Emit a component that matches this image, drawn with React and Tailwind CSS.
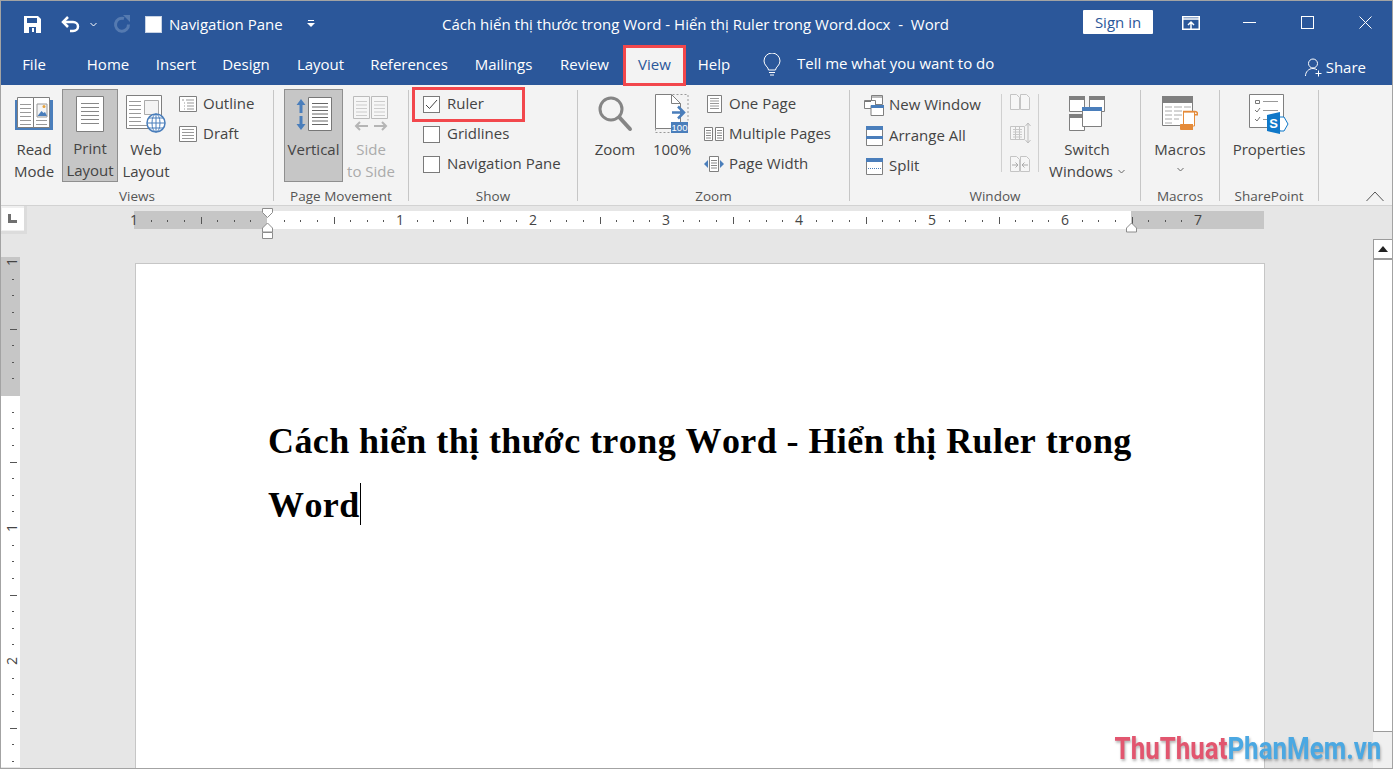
// Word window, View tab, ruler switched on
const gray = '#7f7f7f';
const blue = '#4a7ebb';

const tabs = [
  { label: 'File', cls: 'w-[66px]' },
  { label: 'Home', cls: 'w-[82px]' },
  { label: 'Insert', cls: 'w-[54px]' },
  { label: 'Design', cls: 'w-[86px]' },
  { label: 'Layout', cls: 'w-[63px]' },
  { label: 'References', cls: 'w-[114px]' },
  { label: 'Mailings', cls: 'w-[75px]' },
  { label: 'Review', cls: 'w-[82px] pl-[5px]' },
];

function Lines({ x, y, w, n, gap = 4, color = '#8c8c8c' }) {
  const out = [];
  for (let i = 0; i < n; i++) {
    out.push(<path key={i} d={`M${x} ${y + i * gap + 0.5}h${w}`} stroke={color} fill="none" />);
  }
  return <>{out}</>;
}

function ReadModeIcon() {
  return (
    <svg width="38" height="35" viewBox="0 0 38 35">
      <path d="M0 4h3v27h32V4h3v30H0z" fill={blue} />
      <path d="M2.500 1.500h16v30h-16zM18.500 1.500h16v30h-16z" fill="#fff" stroke={gray} />
      <Lines x={5} y={8} w={11} n={6} color="#999" />
      <Lines x={21} y={24} w={11} n={2} color="#999" />
      <path d="M22 8h10v13H22z" fill="#f5f5f5" stroke="#999" />
      <path d="M22.500 20l4-5 2 2 1.500-1 2 4z" fill={blue} />
      <circle cx="29" cy="10.500" r="1.500" fill="#e8a33d" />
    </svg>
  );
}

function PageIcon() {
  return (
    <svg width="28" height="36" viewBox="0 0 28 36">
      <path d="M.5.500h27v35H.5z" fill="#fff" stroke={gray} />
      <Lines x={5} y={7} w={18} n={6} gap={4} color="#888" />
    </svg>
  );
}

function WebLayoutIcon() {
  return (
    <svg width="40" height="38" viewBox="0 0 40 38">
      <path d="M.5.500h35v33H.5z" fill="#fff" stroke={gray} />
      <Lines x={3} y={6} w={12} n={6} gap={4} color="#999" />
      <Lines x={3} y={30} w={18} n={1} color="#999" />
      <path d="M18.500 5.500h14v14h-14z" fill="#f4f4f4" stroke="#aaa" />
      <circle cx="30" cy="28" r="9" fill="#fff" stroke={blue} strokeWidth="1.500" />
      <path d="M21 28h18M30 19v18M23 23h14M23 33h14" stroke={blue} fill="none" />
      <ellipse cx="30" cy="28" rx="4" ry="9" fill="none" stroke={blue} />
    </svg>
  );
}

function OutlineIcon() {
  return (
    <svg width="18" height="16" viewBox="0 0 18 16">
      <path d="M.5.500h17v15H.5z" fill="#fff" stroke={gray} />
      <path d="M3 4h2M7 4h8M5 7h1M8 7h7M5 10h1M8 10h7M5 13h1M8 13h7" stroke="#999" fill="none" />
    </svg>
  );
}

function DraftIcon() {
  return (
    <svg width="18" height="16" viewBox="0 0 18 16">
      <path d="M.5.500h17v15H.5z" fill="#fff" stroke={gray} />
      <Lines x={3} y={3} w={12} n={4} gap={3} color="#999" />
    </svg>
  );
}

function VerticalIcon() {
  return (
    <svg width="36" height="35" viewBox="0 0 36 35">
      <path d="M12.500.500h23v33h-23z" fill="#fff" stroke="#777" />
      <Lines x={16} y={6} w={16} n={7} gap={3.500} color="#666" />
      <path d="M5 2L0.500 8H3.500v8h3V8h3zM5 33L0.500 27H3.500v-8h3v8h3z" fill={blue} />
    </svg>
  );
}

function SideToSideIcon() {
  return (
    <svg width="36" height="36" viewBox="0 0 36 36">
      <path d="M.5.500h16v22H.5zM18.500.500h16v22h-16z" fill="#f6f6f6" stroke="#bbb" />
      <Lines x={3} y={5} w={11} n={5} gap={3.500} color="#ccc" />
      <Lines x={21} y={5} w={11} n={5} gap={3.500} color="#ccc" />
      <path d="M15 30H3M7 26l-4 4 4 4M21 30h12M29 26l4 4-4 4" stroke="#b5b5b5" strokeWidth="2" fill="none" />
    </svg>
  );
}

function ZoomIcon() {
  return (
    <svg width="36" height="36" viewBox="0 0 36 36">
      <circle cx="14" cy="13" r="11" fill="none" stroke="#858585" strokeWidth="3" />
      <path d="M22.500 21.500L33 33" stroke="#858585" strokeWidth="4" strokeLinecap="round" />
    </svg>
  );
}

function HundredIcon() {
  return (
    <svg width="34" height="40" viewBox="0 0 34 40">
      <path d="M.5 34.500V.5h16l9 9v25z" fill="#fff" stroke={gray} />
      <path d="M16.500.5v9h9" fill="none" stroke={gray} />
      <path d="M.5 34.500v4h16M17.500.5h15.500v26" stroke="#999" strokeDasharray="2 2" fill="none" />
      <path d="M17 18.500h12M23 12.500l6 6-6 6" stroke={blue} strokeWidth="2.500" fill="none" />
      <path d="M16 28h17v11H16z" fill={blue} />
      <text x="24.500" y="37" textAnchor="middle" fontSize="9.500" fill="#fff" fontFamily="'Liberation Sans',sans-serif">100</text>
    </svg>
  );
}

function OnePageIcon() {
  return (
    <svg width="15" height="18" viewBox="0 0 15 18">
      <path d="M.5.500h14v17H.5z" fill="#fff" stroke={gray} />
      <Lines x={3} y={3} w={9} n={5} gap={2.500} color="#999" />
    </svg>
  );
}

function MultiPagesIcon() {
  return (
    <svg width="20" height="14" viewBox="0 0 20 14">
      <path d="M.5.500h8v13h-8zM11.500.500h8v13h-8z" fill="#fff" stroke={gray} />
      <Lines x={2} y={3} w={5} n={4} gap={2.500} color="#888" />
      <Lines x={13} y={3} w={5} n={4} gap={2.500} color="#888" />
    </svg>
  );
}

function PageWidthIcon() {
  return (
    <svg width="20" height="16" viewBox="0 0 20 16">
      <path d="M5.500.500h9v15h-9z" fill="#fff" stroke={gray} />
      <Lines x={7} y={4} w={6} n={4} gap={2.500} color="#888" />
      <path d="M0 8l4-4v8zM20 8l-4-4v8z" fill={blue} />
    </svg>
  );
}

function NewWindowIcon() {
  return (
    <svg width="20" height="21" viewBox="0 0 20 21">
      <path d="M7.500.500h11v9h-11z" fill="#fff" stroke={gray} />
      <path d="M.5 5.500h11v8H.5z" fill="#fff" stroke={gray} />
      <path d="M7 10.500h12.500v10H7z" fill="#fff" stroke={gray} />
      <path d="M7 10h13v3H7z" fill={blue} />
      <path d="M8 2h10M1 6.500h6" stroke="#777" fill="none" />
    </svg>
  );
}

function ArrangeIcon() {
  return (
    <svg width="17" height="20" viewBox="0 0 17 20">
      <path d="M.5.500h16v19H.5z" fill="#fff" stroke={gray} />
      <path d="M0 0h17v4H0zM0 10h17v3H0z" fill={blue} />
    </svg>
  );
}

function SplitIcon() {
  return (
    <svg width="17" height="17" viewBox="0 0 17 17">
      <path d="M.5.500h16v16H.5z" fill="#fff" stroke={gray} />
      <path d="M0 0h17v4H0z" fill={blue} />
      <path d="M2 10.500h13" stroke={blue} strokeDasharray="1 1" fill="none" />
    </svg>
  );
}

function SideBySideSmall() {
  return (
    <svg width="20" height="16" viewBox="0 0 20 16">
      <path d="M.5.500h6l3 3v12h-9zM10.500.500h6l3 3v12h-9z" fill="#f6f6f6" stroke="#c4c4c4" />
    </svg>
  );
}

function SyncScrollIcon() {
  return (
    <svg width="21" height="22" viewBox="0 0 21 22">
      <path d="M.5 4.500h9v13h-9zM5.500 4.500h9v13h-9z" fill="#f6f6f6" stroke="#c4c4c4" />
      <Lines x={3} y={7} w={9} n={4} gap={2.500} color="#c8c8c8" />
      <path d="M18 1v20M15.500 4L18 1l2.500 3M15.500 18l2.500 3 2.500-3" stroke="#bdbdbd" fill="none" />
    </svg>
  );
}

function ResetPosIcon() {
  return (
    <svg width="20" height="16" viewBox="0 0 20 16">
      <path d="M.5.500h6l3 3v12h-9zM10.500.500h6l3 3v12h-9z" fill="#f6f6f6" stroke="#c4c4c4" />
      <path d="M2 9h6M5.500 6.500L8 9l-2.500 2.500M18 9h-6M14.500 6.500L12 9l2.500 2.500" stroke="#aaa" fill="none" />
    </svg>
  );
}

function SwitchIcon() {
  return (
    <svg width="36" height="36" viewBox="0 0 36 36">
      <path d="M.5.500h15v15H.5zM20.500.500h15v15h-15zM.5 18.500h15v16H.5z" fill="#fff" stroke={gray} />
      <path d="M0 0h16v4H0zM20 0h16v4H20zM0 18h16v4H0z" fill="#7f7f7f" />
      <path d="M13.500 11.500h19v19h-19z" fill="#fff" stroke={gray} />
      <path d="M13 11h20v4H13z" fill={blue} />
    </svg>
  );
}

function MacrosIcon() {
  return (
    <svg width="36" height="36" viewBox="0 0 36 36">
      <path d="M.5.500h30v29H.5z" fill="#fff" stroke={gray} />
      <path d="M0 0h31v7H0z" fill="#7f7f7f" />
      <path d="M3 11h7M12 11h8M22 11h7M3 15h7M12 15h8M3 19h7M12 19h8M3 23h7M12 23h5M3 27h7" stroke="#aaa" fill="none" />
      <path d="M21.500 16v14h11V16z" fill="#fff" stroke="#e58b3a" />
      <path d="M21 15.500h12c1.500 0 2.500 1 2.500 2.500" fill="none" stroke="#e58b3a" strokeWidth="1.500" />
      <path d="M33 18h3v1.500h-3z" fill="#e58b3a" />
      <path d="M18 29c0-1 .5-1 1-1h12v6H19c-.5 0-1-.5-1-1z" fill="#e58b3a" />
    </svg>
  );
}

function PropertiesIcon() {
  return (
    <svg width="40" height="40" viewBox="0 0 40 40">
      <path d="M.5.500h34v33H.5z" fill="#fff" stroke={gray} />
      <path d="M6.500 6.500h4v3h-4z" fill="none" stroke="#777" />
      <path d="M14 7.500h15M14 16.500h15M14 25.500h7" stroke="#999" fill="none" />
      <path d="M6 16l2 2 3-4M6 25l2 2 3-4" stroke="#777" fill="none" />
      <path d="M26 23h5l4 0 4 7-4 7h-4z" fill="#fff" stroke="#0f78c9" />
      <path d="M18 21l13-3v22l-13-3z" fill="#0f78c9" />
      <text x="24.500" y="34" textAnchor="middle" fontSize="13" fontWeight="700" fill="#fff" fontFamily="'Liberation Sans',sans-serif">S</text>
    </svg>
  );
}

function Sep() {
  return <div className="w-px shrink-0 bg-[#c6c6c6] mt-[5px] mb-[4px]" />;
}

function Group({ cls, label, children }) {
  return (
    <div className={`shrink-0 flex flex-col ${cls}`}>
      <div className="flex h-[102px] items-start">{children}</div>
      <div className="h-[18px] text-center text-[13.500px] leading-[18px] text-[#555]">{label}</div>
    </div>
  );
}

function BigButton({ cls = '', icon, lines, active, disabled, chevron }) {
  return (
    <div className={`mt-[4px] h-[93px] shrink-0 flex flex-col items-center ${cls} ${active ? 'bg-[#c6c6c6] border border-[#8f8f8f]' : ''}`}>
      <div className={`flex w-full items-center justify-center ${active ? 'h-[48px]' : 'h-[49px]'}`}>{icon}</div>
      {lines.map((l) => (
        <div key={l} className={`h-[22px] whitespace-nowrap leading-[22px] ${disabled ? 'text-[#ababab]' : 'text-[#444]'}`}>{l}</div>
      ))}
      {chevron}
    </div>
  );
}

function SmallRow({ icon, label, h = 'h-[30px]' }) {
  return (
    <div className={`flex items-center gap-[5px] whitespace-nowrap text-[#444] ${h}`}>
      <div className="flex w-[20px] justify-center">{icon}</div>
      <span className="mb-[2px]">{label}</span>
    </div>
  );
}

function Chevron({ cls = '', color = '#666' }) {
  return (
    <svg className={cls} width="7" height="5" viewBox="0 0 7 5">
      <path d="M.5 1l3 3 3-3" stroke={color} fill="none" />
    </svg>
  );
}

function CheckRow({ label, checked, box }) {
  return (
    <div className="relative flex h-[30px] items-center gap-[7px] whitespace-nowrap text-[#444]">
      <div className="flex h-[17px] w-[17px] items-center justify-center border border-[#7a7a7a] bg-white">
        {checked && (
          <svg width="13" height="11" viewBox="0 0 13 11">
            <path d="M1 6l3.500 3.500L12 1" stroke="#444" fill="none" />
          </svg>
        )}
      </div>
      <span className="mb-[1px]">{label}</span>
      {box && <div className="absolute left-[-11px] top-[-2px] h-[35px] w-[113px] border-[3px] border-[#f2474c]" />}
    </div>
  );
}

function HRuler() {
  const marks = [];
  for (let k = -8; k <= 55; k++) {
    if (k % 8 === 0) continue;
    const x = 133 + k * 16.625;
    if (k % 4 === 0) marks.push(<path key={k} d={`M${Math.round(x) + 0.5} 6v7`} stroke="#555" />);
    else marks.push(<path key={k} d={`M${Math.round(x) + 0.5} 9v2`} stroke="#555" />);
  }
  const nums = [[1, 0], [1, 266], [2, 399], [3, 532], [4, 665], [5, 798], [6, 931], [7, 1064]];
  return (
    <svg className="mt-[2px] ml-[103px] block shrink-0" width="1139" height="33" viewBox="-4 0 1139 33">
      <path d="M0 3h1130v18H0z" fill="#fff" />
      <path d="M0 3h133v18H0zM997 3h133v18H997z" fill="#c6c6c6" />
      <g transform="translate(0 3)">{marks}</g>
      {nums.map(([n, x]) => (
        <text key={x} x={x} y="17" textAnchor="middle" fontSize="14" fill="#444" fontFamily="'Open Sans',sans-serif">{n}</text>
      ))}
      <path d="M128.500 .5h10v4l-5 5-5-5z" fill="#fff" stroke="#8c8c8c" />
      <path d="M133.500 15l5 5v4h-10v-4zM128.500 24.500h10v6h-10z" fill="#fff" stroke="#8c8c8c" />
      <path d="M997.500 15l5 5v4h-10v-4z" fill="#fff" stroke="#8c8c8c" />
    </svg>
  );
}

function VRuler() {
  const marks = [];
  for (let k = -8; k <= 30; k++) {
    if (k % 8 === 0) continue;
    const y = 138 + k * 16.625;
    if (k % 4 === 0) marks.push(<path key={k} d={`M9 ${Math.round(y) + 0.5}h7`} stroke="#555" />);
    else marks.push(<path key={k} d={`M11 ${Math.round(y) + 0.5}h2`} stroke="#555" />);
  }
  return (
    <svg className="block shrink-0" width="19" height="510" viewBox="0 0 19 510">
      <path d="M0 0h19v510H0z" fill="#fff" />
      <path d="M0 0h19v139H0z" fill="#c6c6c6" />
      {marks}
      {[[1, 5], [1, 271], [2, 404]].map(([n, y]) => (
        <text key={y} x="0" y="0" textAnchor="middle" fontSize="14" fill="#444" fontFamily="'Open Sans',sans-serif" transform={`translate(16 ${y}) rotate(-90)`}>{n}</text>
      ))}
    </svg>
  );
}

export default function App() {
  return (
    <div className="relative flex h-[769px] w-[1393px] flex-col overflow-hidden border border-[#a3a3a3] bg-[#e6e6e6] font-['Open_Sans',sans-serif] text-[15px]">
      {/* title bar */}
      <div className="flex h-[43px] shrink-0 items-center bg-[#2b579a] text-white">
        <div className="mt-[3px] flex w-[441px] shrink-0 items-center">
          <svg className="ml-[23px]" width="17" height="17" viewBox="0 0 17 17">
            <path d="M0 0h14l3 3v14H0z" fill="#fff" />
            <path d="M3 2h10v5H3zM5 11h7v6H5z" fill="#2b579a" />
            <path d="M8 12h2v4H8z" fill="#fff" />
          </svg>
          <svg className="ml-[20px]" width="19" height="17" viewBox="0 0 19 17">
            <path d="M7 1L2 6l5 5" stroke="#fff" strokeWidth="2.500" fill="none" />
            <path d="M2 6h10c3 0 5 2 5 4.500S15 15 12 15H9" stroke="#fff" strokeWidth="2.500" fill="none" />
          </svg>
          <Chevron cls="ml-[10px]" color="#fff" />
          <svg className="ml-[16px]" width="18" height="18" viewBox="0 0 18 18">
            <path d="M11 3.500A6.500 6.500 0 1 0 15.500 9.500" stroke="#557ab0" strokeWidth="3" fill="none" />
            <path d="M10 0h7v7z" fill="#557ab0" />
          </svg>
          <div className="ml-[14px] h-[17px] w-[17px] border border-[#c8d3e4] bg-white" />
          <span className="ml-[7px]">Navigation Pane</span>
          <svg className="ml-[24px]" width="8" height="8" viewBox="0 0 8 8">
            <path d="M1 .5h6" stroke="#fff" fill="none" />
            <path d="M0 3h8L4 7z" fill="#fff" />
          </svg>
        </div>
        <div className="mt-[3px] w-[641px] shrink-0 whitespace-pre">Cách hiển thị thước trong Word - Hiển thị Ruler trong Word.docx  -  Word</div>
        <div className="mb-[1px] flex h-[24px] w-[70px] items-center justify-center rounded-[1px] bg-white text-[#2b579a]">Sign in</div>
        <svg className="ml-[29px]" width="18" height="14" viewBox="0 0 18 14">
          <path d="M.75.750h16.500v12.500H.75z" fill="none" stroke="#fff" strokeWidth="1.500" />
          <path d="M1 3h16" stroke="#fff" strokeWidth="1.500" />
          <path d="M9 13V6M6 9l3-3 3 3" stroke="#fff" strokeWidth="1.500" fill="none" />
        </svg>
        <div className="ml-[43px] h-px w-[13px] bg-white" />
        <div className="ml-[45px] h-[13px] w-[13px] border border-white" />
        <svg className="ml-[45px]" width="13" height="13" viewBox="0 0 13 13">
          <path d="M.5.500l12 12M12.500.500l-12 12" stroke="#fff" fill="none" />
        </svg>
      </div>

      {/* tabs */}
      <div className="relative z-10 flex h-[41px] shrink-0 items-center bg-[#2b579a] text-white">
        {tabs.map((t) => (
          <div key={t.label} className={`shrink-0 text-center ${t.cls}`}>{t.label}</div>
        ))}
        <div className="mt-[1px] flex h-[41px] w-[63px] shrink-0 items-center justify-center self-start border-[3px] border-[#f2474c] bg-[#f3f3f3] pb-[2px] text-[#2b579a]">View</div>
        <div className="w-[56px] shrink-0 text-center">Help</div>
        <svg className="ml-[20px]" width="20" height="24" viewBox="0 0 20 24">
          <path d="M6.500 17c0-3-4.500-4.500-4.500-9a8 8 0 0 1 16 0c0 4.500-4.500 6-4.500 9zM7 19.500h6M8 22h4" stroke="#fff" fill="none" />
        </svg>
        <span className="ml-[15px] mb-[2px]">Tell me what you want to do</span>
        <div className="ml-auto mr-[26px] mt-[6px] flex items-center gap-[3px]">
          <svg width="18" height="19" viewBox="0 0 18 19">
            <circle cx="8" cy="5.500" r="4.500" stroke="#fff" fill="none" />
            <path d="M.5 18c0-4 3-7.500 7.500-7.500 1.500 0 3 .5 4 1.300M13.500 12.500v6M10.500 15.500h6" stroke="#fff" fill="none" />
          </svg>
          Share
        </div>
      </div>

      {/* ribbon */}
      <div className="flex h-[121px] shrink-0 border-b border-[#d2d2d2] bg-[#f3f3f3]">
        <Group cls="w-[272px]" label="Views">
          <div className="w-[5px]" />
          <BigButton cls="w-[56px]" icon={<ReadModeIcon />} lines={['Read', 'Mode']} />
          <BigButton cls="w-[56px]" icon={<PageIcon />} lines={['Print', 'Layout']} active />
          <BigButton cls="w-[56px]" icon={<WebLayoutIcon />} lines={['Web', 'Layout']} />
          <div className="ml-[4px] mt-[4px] flex flex-col">
            <SmallRow icon={<OutlineIcon />} label="Outline" />
            <SmallRow icon={<DraftIcon />} label="Draft" />
          </div>
        </Group>
        <Sep />
        <Group cls="w-[134px]" label="Page Movement">
          <div className="w-[10px]" />
          <BigButton cls="w-[59px]" icon={<VerticalIcon />} lines={['Vertical']} active />
          <BigButton cls="w-[56px]" icon={<SideToSideIcon />} lines={['Side', 'to Side']} disabled />
        </Group>
        <Sep />
        <Group cls="w-[168px]" label="Show">
          <div className="ml-[14px] mt-[4px] flex flex-col">
            <CheckRow label="Ruler" checked box />
            <CheckRow label="Gridlines" />
            <CheckRow label="Navigation Pane" />
          </div>
        </Group>
        <Sep />
        <Group cls="w-[271px]" label="Zoom">
          <div className="w-[12px]" />
          <BigButton cls="w-[50px]" icon={<ZoomIcon />} lines={['Zoom']} />
          <BigButton cls="ml-[5px] w-[54px]" icon={<HundredIcon />} lines={['100%']} />
          <div className="ml-[5px] mt-[4px] flex flex-col">
            <SmallRow icon={<OnePageIcon />} label="One Page" />
            <SmallRow icon={<MultiPagesIcon />} label="Multiple Pages" />
            <SmallRow icon={<PageWidthIcon />} label="Page Width" />
          </div>
        </Group>
        <Sep />
        <Group cls="w-[290px]" label="Window">
          <div className="ml-[14px] mt-[5px] flex w-[137px] shrink-0 flex-col">
            <SmallRow h="h-[30.500px]" icon={<NewWindowIcon />} label="New Window" />
            <SmallRow h="h-[30.500px]" icon={<ArrangeIcon />} label="Arrange All" />
            <SmallRow h="h-[30.500px]" icon={<SplitIcon />} label="Split" />
          </div>
          <div className="mt-[9px] h-[78px] w-px shrink-0 bg-[#d0d0d0]" />
          <div className="mt-[9px] flex h-[78px] w-[36px] shrink-0 flex-col items-center justify-between">
            <SideBySideSmall />
            <SyncScrollIcon />
            <ResetPosIcon />
          </div>
          <div className="mt-[9px] h-[78px] w-px shrink-0 bg-[#d0d0d0]" />
          <BigButton
            cls="ml-[3px] w-[90px]"
            icon={<SwitchIcon />}
            lines={['Switch']}
            chevron={
              <div className="flex h-[22px] items-center gap-[5px] leading-[22px] text-[#444]">
                Windows <Chevron />
              </div>
            }
          />
        </Group>
        <Sep />
        <Group cls="w-[78px]" label="Macros">
          <BigButton
            cls="w-[78px]"
            icon={<MacrosIcon />}
            lines={['Macros']}
            chevron={<Chevron cls="mt-[7px]" />}
          />
        </Group>
        <Sep />
        <Group cls="w-[98px]" label="SharePoint">
          <BigButton cls="w-[98px]" icon={<PropertiesIcon />} lines={['Properties']} />
        </Group>
        <Sep />
        <svg className="ml-[47px] mt-[106px]" width="18" height="11" viewBox="0 0 18 11">
          <path d="M.5 10L9 1l8.500 9" stroke="#555" fill="none" />
        </svg>
      </div>

      {/* document area */}
      <div className="flex min-h-0 flex-1">
        <div className="flex w-[26px] shrink-0 flex-col">
          <div className="flex h-[28px] w-[26px] items-center justify-center border-[3px] border-l-0 border-t-0 border-[#dcdcdc] bg-[#f0f0f0]">
            <div className="flex h-[22px] w-[22px] items-center justify-center bg-white">
              <svg width="9" height="9" viewBox="0 0 9 9">
                <path d="M0 0h3v6h6v3H0z" fill="#6f6f6f" />
              </svg>
            </div>
          </div>
          <div className="mt-[23px]">
            <VRuler />
          </div>
        </div>
        <div className="flex min-w-0 flex-1 flex-col">
          <HRuler />
          <div className="ml-[108px] mt-[22px] min-h-0 w-[1130px] flex-1 border border-b-0 border-[#c6c6c6] bg-white pl-[132px] pr-[130px] pt-[145px] font-['Liberation_Serif',serif] text-[36px] font-bold leading-[64px] tracking-[0.42px] text-black [font-kerning:none]">
            Cách hiển thị thước trong Word - Hiển thị Ruler trong Word
            <span className="inline-block h-[42px] w-px bg-black align-[-8px]" />
          </div>
        </div>
        <div className="flex w-[19px] shrink-0 flex-col pt-[33px]">
          <div className="flex h-[21px] items-center justify-center border border-b-2 border-r-0 border-[#9b9b9b] bg-white">
            <svg width="10" height="6" viewBox="0 0 10 6">
              <path d="M5 0l5 6H0z" fill="#222" />
            </svg>
          </div>
          <div className="h-[472px] border-b border-l border-[#9b9b9b] bg-white" />
          <div className="flex-1 bg-[#f0f0f0]" />
        </div>
      </div>

      {/* watermark */}
      <div className="absolute bottom-[3px] right-[11px] origin-right scale-x-[0.81] whitespace-nowrap font-['Roboto',sans-serif] text-[32px] font-bold leading-[34px] blur-[0.7px] [text-shadow:1px_2px_3px_rgba(0,0,0,0.3)]">
        <span className="text-[#e2566f]">ThuThuat</span>
        <span className="text-[#4ba8e2]">PhanMem.vn</span>
      </div>
    </div>
  );
}
